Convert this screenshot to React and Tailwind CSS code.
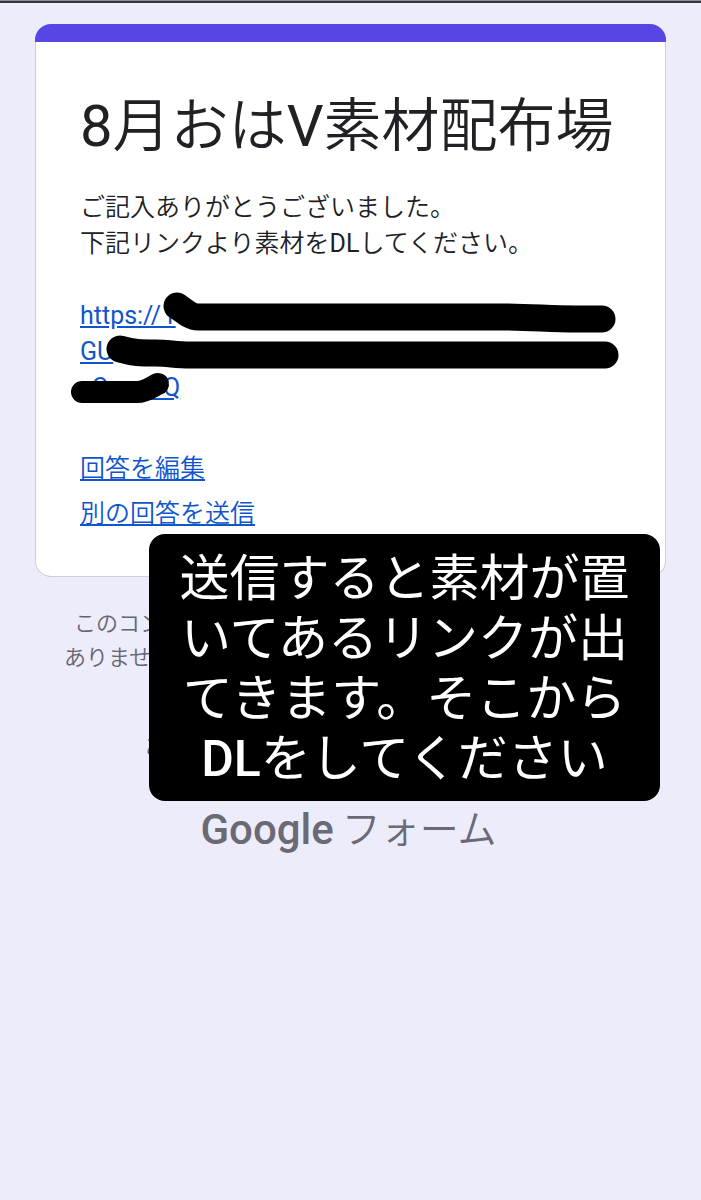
const strokes = [
  { width: 27, d: 'M177 306 C183 310 190 317 198 317 L500 317 C530 317 550 319 575 319 L602 319' },
  { width: 27, d: 'M120 349 C134 353 140 353 156 353 C168 353 176 355 190 355 L605 355' },
  { width: 22, d: 'M82 392 L137 392 C147 392 154 385 158 384' },
]

function Scribble() {
  return (
    <svg className="pointer-events-none absolute top-0 left-0 h-[600px] w-[701px]" viewBox="0 0 701 600" fill="none" stroke="#000" strokeLinecap="round" strokeLinejoin="round" aria-hidden="true">
      {strokes.map((s) => <path key={s.d} d={s.d} strokeWidth={s.width} />)}
    </svg>
  )
}

function FormCard() {
  return (
    <main className="rounded-2xl border border-t-0 border-[#d0cfd8] bg-white">
      <div className="-mx-px h-[18px] rounded-t-2xl bg-[#5746e3]" />
      <div className="px-[44px] pt-[46px] pb-[40px]">
        <h1 className="text-[58px] leading-[76px] whitespace-nowrap">
          <span className="font-normal">8</span>月おは<span className="font-normal">V</span>素材配布場
        </h1>
        <p className="mt-[26px] text-[25px] leading-[36px]">
          ご記入ありがとうございました。<br />
          下記リンクより素材を<span className="font-normal">DL</span>してください。
        </p>
        <a href="#download" className="mt-[36px] block text-[25px] leading-[36px] font-normal text-[#1155cc] underline">
          https:// r<br />
          GU<br />
          <span className="whitespace-pre">{'  S         Q'}</span>
        </a>
        <nav className="mt-[40px] flex flex-col items-start text-[25px] leading-[45px] text-[#1155cc] underline">
          <a href="#edit">回答を編集</a>
          <a href="#again">別の回答を送信</a>
        </nav>
      </div>
    </main>
  )
}

function Footer() {
  return (
    <footer className="text-[22px] leading-[34px] text-[#66646f]">
      <p className="mt-[30px] pl-[29px] indent-[10px]">
        このコン<br />
        ありませ
      </p>
      <p className="mt-[55px] pl-[110px]">あ</p>
      <p className="mt-[40px] flex items-center justify-center gap-2 pr-1 text-[39px] leading-[52px] text-[#6b6a74]">
        <span className="text-[42px] font-medium">Google</span>
        <span>フォーム</span>
      </p>
    </footer>
  )
}

export default function App() {
  return (
    <div lang="ja" className="relative min-h-screen bg-[#edecfb] font-['Roboto','Noto_Sans_CJK_JP',sans-serif] font-[350] text-[#202124]">
      <div className="h-[3px] border-t border-[#8b9096] bg-[#34383e]" />
      <div className="px-[35px] pt-[21px]">
        <FormCard />
        <Footer />
      </div>
      <Scribble />
      <aside className="absolute top-[534px] left-[149px] w-[511px] rounded-2xl bg-black px-[20px] pt-[15px] pb-[12px] text-center text-[50px] leading-[60px] font-normal text-white">
        送信すると素材が置<br />
        いてあるリンクが出<br />
        てきます。そこから<br />
        <span className="font-medium">DL</span>をしてください
      </aside>
    </div>
  )
}
